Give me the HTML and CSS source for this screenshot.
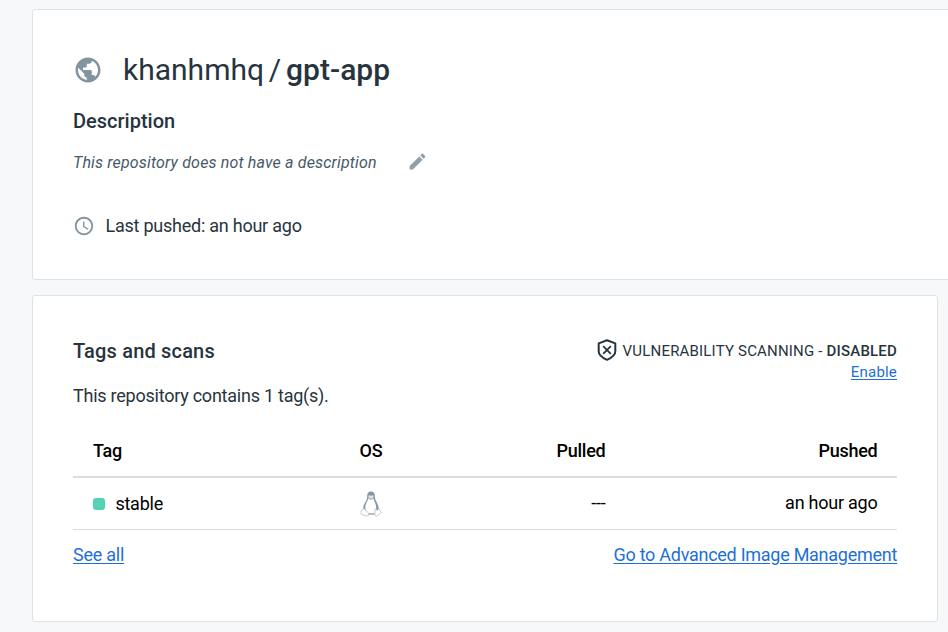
FILE: index.html
```html
<!DOCTYPE html>
<html lang="en">
<head>
<meta charset="utf-8">
<title>khanhmhq/gpt-app</title>
<link rel="stylesheet" href="styles.css">
</head>
<body>
<section class="card overview">
  <h1 class="repo">
    <svg class="globe" viewBox="0 0 24 24"><path d="M12 2C6.48 2 2 6.48 2 12s4.48 10 10 10 10-4.48 10-10S17.52 2 12 2zm-1 17.93c-3.95-.49-7-3.85-7-7.93 0-.62.08-1.21.21-1.79L9 15v1c0 1.1.9 2 2 2v1.93zm6.9-2.54c-.26-.81-1-1.39-1.9-1.39h-1v-3c0-.55-.45-1-1-1H8v-2h2c.55 0 1-.45 1-1V7h2c1.1 0 2-.9 2-2v-.41c2.93 1.19 5 4.06 5 7.41 0 2.08-.8 3.97-2.1 5.39z"/></svg>
    <span class="owner">khanhmhq</span><span class="slash">/</span><span class="name">gpt-app</span>
  </h1>
  <h2 class="heading">Description</h2>
  <div class="description">
    <em>This repository does not have a description</em>
    <svg class="pencil" viewBox="0 0 24 24"><path d="M3 17.25V21h3.75L17.81 9.94l-3.75-3.75L3 17.25zM20.71 7.04c.39-.39.39-1.02 0-1.41l-2.34-2.34c-.39-.39-1.02-.39-1.41 0l-1.83 1.83 3.75 3.75 1.83-1.83z"/></svg>
  </div>
  <div class="last-pushed">
    <svg class="clock" viewBox="0 0 24 24"><path d="M11.99 2C6.47 2 2 6.48 2 12s4.47 10 9.99 10C17.52 22 22 17.52 22 12S17.52 2 11.99 2zM12 20c-4.42 0-8-3.58-8-8s3.58-8 8-8 8 3.58 8 8-3.58 8-8 8zm.5-13H11v6l5.25 3.15.75-1.23-4.5-2.67z"/></svg>
    <span>Last pushed: an hour ago</span>
  </div>
</section>
<section class="card tags">
  <header class="tags-head">
    <h2 class="heading">Tags and scans</h2>
    <div class="scan">
      <div class="scan-status">
        <svg class="shield" viewBox="0 0 20 22" fill="none" stroke="currentColor"><path stroke-width="2" stroke-linejoin="round" d="M10 1.200 18.300 4.400V12.500C18.300 16.500 14.500 18.800 10 20.800 5.500 18.800 1.700 16.500 1.700 12.500V4.400z"/><path stroke-width="1.800" d="M6.200 7.200l7.600 7.600M13.800 7.200l-7.600 7.600"/></svg>
        <span class="scan-text">VULNERABILITY SCANNING - <b>DISABLED</b></span>
      </div>
      <a class="enable" href="#">Enable</a>
    </div>
  </header>
  <p class="count">This repository contains 1 tag(s).</p>
  <div class="table">
    <div class="row head"><span>Tag</span><span>OS</span><span>Pulled</span><span>Pushed</span></div>
    <div class="row">
      <span class="tag"><i class="dot"></i>stable</span>
      <span class="os"><svg class="tux" viewBox="0 0 22 26">
        <path d="M7.200 5C7.200 2 8.500.5 11 .5s3.800 1.500 3.800 4.500c0 3.500 1.200 4.500 2.500 7.500 1 2.300 1.800 4.500 1.200 6.500l-3 4h-9L3.200 18c-.2-3 1.300-5.500 2.500-7.500 1-1.700 1.500-3 1.500-5.500z" fill="#8597a3"/>
        <path d="M8.300 7.500c1.500 1.500 3.500 1.500 5.200 0 .6 3 2.500 5.500 2.700 8.500.2 3-1 6-1.800 7H8.200C6 20 4.800 18 5.500 14.500 6 12 7.700 10 8.300 7.500z" fill="#fff"/>
        <path d="M8.500 4.700c.8-.8 1.500-.5 2.200.4.8-1.200 2-1.200 2.700 0v1.700c-1.600 1.300-3.400 1.300-4.900 0z" fill="#dfe4e7"/>
        <path d="M4 17.500 8.800 22.500c.2 2-1 2.800-2.500 2.500L1.500 23.500C.3 23 1.300 21.500.8 20c.4-1 2.300-1 3.200-2.500zM15.200 17.800c1 1.800 2.500 1.800 3.500 0 1.300 1 1 2.500 2.600 3.500.2 1-2 1.700-3.300 3-1.500 1.500-3.200.8-3.200-.8z" fill="#fff" stroke="#aab6bd" stroke-width=".7"/>
        <path d="M8.500 23h6" stroke="#8597a3" stroke-width="1.200"/>
      </svg></span>
      <span>---</span><span class="pushed">an hour ago</span>
    </div>
  </div>
  <footer class="links"><a class="see" href="#">See all</a><a class="manage" href="#">Go to Advanced Image Management</a></footer>
</section>
</body>
</html>
```
FILE: styles.css
```css
* { box-sizing: border-box; }
body {
  margin: 0;
  padding: 9px 0 10px 32px;
  height: 632px;
  overflow: hidden;
  background: #f7f8fa;
  color: #27343e;
  font: 18px/24px Roboto, sans-serif;
  letter-spacing: -.24px;
}
h1, h2, p { margin: 0; }
a { color: #1d6fd8; text-underline-offset: 2px; }
.card {
  background: #fff;
  border: 1px solid #dfe2e5;
  border-radius: 3px;
  padding: 0 40px;
}
.overview { height: 271px; width: 940px; padding-top: 40px; }
.repo { display: flex; align-items: center; height: 40px; font-size: 30px; line-height: 40px; font-weight: 400; letter-spacing: 0; }
.globe { width: 30px; height: 30px; margin: 0 20px 0 0; fill: #8294a0; }
.slash { margin: 0 5px 0 4.7px; }
.name { font-weight: 500; }
.heading { font-size: 20px; line-height: 24px; font-weight: 500; letter-spacing: 0; }
.tags .heading { letter-spacing: .18px; }
.overview .heading { margin-top: 19px; }
.description { display: flex; align-items: flex-end; height: 24px; margin-top: 18px; font-size: 16px; letter-spacing: .16px; color: #455a68; }
.pencil { width: 21px; height: 21px; margin: 0 0 3.5px 30.5px; fill: #919fa9; }
.last-pushed { display: flex; align-items: center; margin-top: 39px; }
.clock { width: 22px; height: 22px; margin-right: 10.5px; fill: #8294a0; }
.tags { width: 906px; height: 327px; margin-top: 15px; padding-top: 43px; }
.tags-head { display: flex; justify-content: space-between; height: 45px; }
.scan { display: flex; flex-direction: column; align-items: flex-end; font-size: 15px; line-height: 21px; letter-spacing: .19px; }
.scan-status { display: flex; align-items: flex-end; height: 23px; }
.shield { width: 20px; height: 22px; margin: 0 6px 1px 0; }
.scan b { font-weight: 500; }
.table { margin-top: 17px; color: #000; }
.row {
  display: grid;
  grid-template-columns: 190px 176px 1fr 272px;
  align-items: center;
  height: 52px;
  padding: 0 19.5px 0 20px;
  border-bottom: 1px solid #dcdddf;
}
.head { height: 53px; border-bottom-width: 2px; font-weight: 500; }
.row > :nth-child(2) { text-align: center; }
.row > :nth-child(n+3) { text-align: right; }
.row > .pushed { padding-bottom: 2px; }
.row:not(.head) > :nth-child(3) { padding-bottom: 1px; }
.tag { display: flex; align-items: center; }
.dot { width: 12px; height: 12px; margin-right: 10.4px; border-radius: 3px; background: #55d1b3; }
.os { display: flex; justify-content: center; }
.tux { width: 22px; height: 26px; }
.links { display: flex; justify-content: space-between; margin-top: 13px; }
.manage { letter-spacing: -.27px; }
```
